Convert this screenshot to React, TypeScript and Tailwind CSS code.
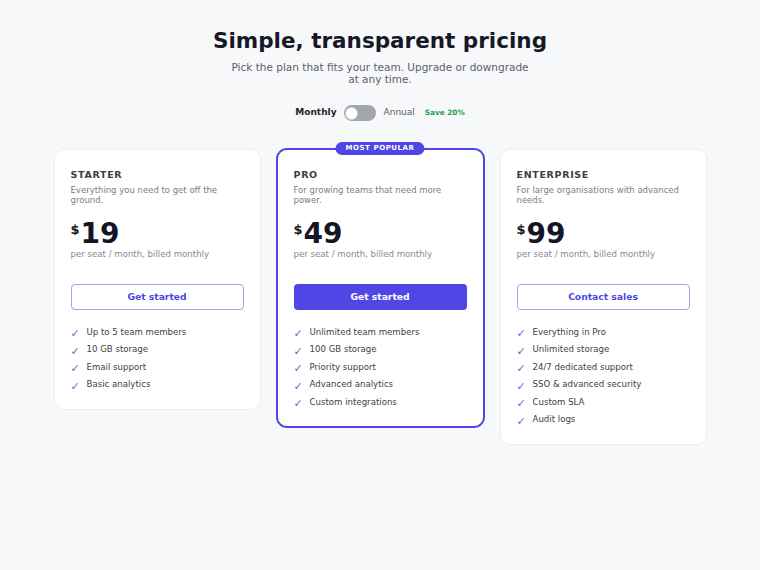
import { useState } from 'react';

type Plan = {
  name: string;
  blurb: string;
  price: number;
  cta: string;
  features: string[];
  popular?: boolean;
};

const PLANS: Plan[] = [
  {
    name: 'Starter',
    blurb: 'Everything you need to get off the ground.',
    price: 19,
    cta: 'Get started',
    features: ['Up to 5 team members', '10 GB storage', 'Email support', 'Basic analytics'],
  },
  {
    name: 'Pro',
    blurb: 'For growing teams that need more power.',
    price: 49,
    cta: 'Get started',
    popular: true,
    features: [
      'Unlimited team members',
      '100 GB storage',
      'Priority support',
      'Advanced analytics',
      'Custom integrations',
    ],
  },
  {
    name: 'Enterprise',
    blurb: 'For large organisations with advanced needs.',
    price: 99,
    cta: 'Contact sales',
    features: [
      'Everything in Pro',
      'Unlimited storage',
      '24/7 dedicated support',
      'SSO & advanced security',
      'Custom SLA',
      'Audit logs',
    ],
  },
];

function PlanCard({ plan, annual }: { plan: Plan; annual: boolean }) {
  const price = annual ? Math.round(plan.price * 0.8) : plan.price;
  return (
    <div
      className={
        'relative rounded-[10px] border bg-white px-4 pt-[18px] pb-[17px] ' +
        (plan.popular ? 'border-[#4f46e5] ring-1 ring-[#4f46e5]' : 'border-[#eceef2]')
      }
    >
      {plan.popular && (
        <span className="absolute -top-[8px] left-1/2 -translate-x-1/2 rounded-full bg-[#4f46e5] px-[10px] py-[1px] text-[7px] font-bold leading-[11px] tracking-[0.08em] text-white">
          MOST POPULAR
        </span>
      )}
      <div className="text-[9.5px] font-bold leading-[14px] tracking-[0.07em] text-[#3a3d45] uppercase">{plan.name}</div>
      <p className="mt-[3px] text-[8.5px] leading-[10px] text-[#7a7e88]">{plan.blurb}</p>
      <div className="mt-[14px] flex items-start">
        <span className="mt-[4px] text-[13px] font-bold leading-none text-[#141627]">$</span>
        <span className="ml-[1px] text-[28px] font-bold leading-[30px] text-[#141627]">{price}</span>
      </div>
      <p className="-mt-[1px] text-[8.6px] leading-[12px] text-[#868a94]">per seat / month, billed {annual ? 'annually' : 'monthly'}</p>
      <button
        className={
          'mt-[24px] h-[26px] w-full rounded-[4px] text-[9.2px] font-bold ' +
          (plan.popular
            ? 'bg-[#4f46e5] text-white'
            : 'border border-[#a6a1ee] bg-white text-[#4f46e5]')
        }
      >
        {plan.cta}
      </button>
      <ul className="mt-[15px] flex flex-col gap-[3.5px]">
        {plan.features.map((f) => (
          <li key={f} className="flex h-[14px] items-center gap-[5px] text-[8.6px] text-[#3d4048]">
            <span className="mt-[3px] w-[11px] text-[11px] leading-none text-[#6a5fd3]">✓</span>
            {f}
          </li>
        ))}
      </ul>
    </div>
  );
}

export default function App() {
  const [annual, setAnnual] = useState(false);

  return (
    <div className="min-h-[570px] w-full bg-[#f7f8fa] pt-[27px] font-['DejaVu_Sans',sans-serif]">
      <div className="flex flex-col items-center">
        <h1 className="text-[21.5px] font-bold leading-[28px] text-[#161828]">Simple, transparent pricing</h1>
        <p className="mt-[7px] text-center text-[10.5px] leading-[11.5px] text-[#5c606a]">
          Pick the plan that fits your team. Upgrade or downgrade
          <br />
          at any time.
        </p>
        <div className="mt-[20px] flex items-center">
          <span className="text-[9px] font-bold text-[#1d1f2b]">Monthly</span>
          <button
            onClick={() => setAnnual((a) => !a)}
            className={
              'ml-[7px] flex h-[16px] w-[32px] items-center rounded-full p-[1.5px] ' +
              (annual ? 'justify-end bg-[#4f46e5]' : 'justify-start bg-[#a3a6ad]')
            }
          >
            <span className="h-[13px] w-[13px] rounded-full border border-[#d4d6da] bg-white" />
          </button>
          <span className="ml-[8px] text-[9px] text-[#5a5e68]">Annual</span>
          <span className="ml-[10px] text-[7.3px] font-bold text-[#16a34a]">Save 20%</span>
        </div>
      </div>
      <div className="mx-auto mt-[28px] grid w-[653px] grid-cols-3 items-start gap-[16px]">
        {PLANS.map((p) => (
          <PlanCard key={p.name} plan={p} annual={annual} />
        ))}
      </div>
    </div>
  );
}
